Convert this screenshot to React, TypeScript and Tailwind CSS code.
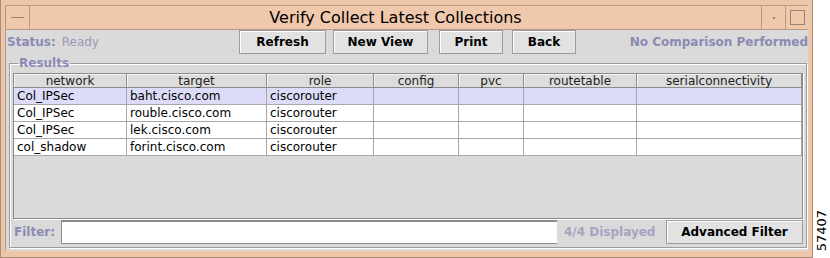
const columns = [
  { name: "network", width: 113 },
  { name: "target", width: 140 },
  { name: "role", width: 107 },
  { name: "config", width: 85 },
  { name: "pvc", width: 65 },
  { name: "routetable", width: 113 },
  { name: "serialconnectivity", width: 165 },
];

const rows = [
  ["Col_IPSec", "baht.cisco.com", "ciscorouter"],
  ["Col_IPSec", "rouble.cisco.com", "ciscorouter"],
  ["Col_IPSec", "lek.cisco.com", "ciscorouter"],
  ["col_shadow", "forint.cisco.com", "ciscorouter"],
];

const font = "font-['DejaVu_Sans',sans-serif]";
const label = "text-[12px] font-bold text-[#8a8ab4]";

const Button = ({ text, width }: { text: string; width: number }) => (
  <button
    className="flex h-[24px] items-center justify-center border border-[#9c9c9c] bg-[#e2e2e2] text-[12px] font-bold text-black shadow-[inset_1px_1px_0_#ffffff]"
    style={{ width }}
  >
    {text}
  </button>
);

const TitleBar = () => (
  <div className="flex h-[24px] border-b border-[#b89a84] bg-[#f0c9ac]">
    <div className="flex w-[24px] items-center justify-center border-r border-[#b89a84]">
      <div className="h-[1px] w-[13px] bg-[#a08070]" />
    </div>
    <div className="flex flex-1 items-center justify-center text-[16px] text-black">
      Verify Collect Latest Collections
    </div>
    <div className="flex w-[24px] items-center justify-center border-l border-[#b89a84]">
      <div className="h-[2px] w-[2px] bg-[#a08070]" />
    </div>
    <div className="flex w-[23px] items-center justify-center border-l border-[#b89a84]">
      <div className="h-[15px] w-[15px] border border-[#a08070]" />
    </div>
  </div>
);

const ResultsTable = () => (
  <div className="flex h-[146px] flex-col border border-[#8c8c8c] bg-[#dadada] shadow-[1px_1px_0_#ffffff]">
    <div className="flex">
      {columns.map((col) => (
        <div
          key={col.name}
          className="flex h-[14px] items-center justify-center border-r border-b border-[#8c8c8c] bg-[#dcdcdc] text-[12px] leading-none text-[#222] shadow-[inset_1px_1px_0_#f4f4f4]"
          style={{ width: col.width }}
        >
          {col.name}
        </div>
      ))}
    </div>
    {rows.map((row, r) => (
      <div
        key={r}
        className={`flex ${r === 0 ? "bg-[#dcdcf8]" : "bg-white"}`}
      >
        {columns.map((col, c) => (
          <div
            key={col.name}
            className="flex h-[17px] items-center border-r border-b border-[#a8a8a8] pl-[3px] text-[12px] leading-none text-black"
            style={{ width: col.width }}
          >
            {row[c] ?? ""}
          </div>
        ))}
      </div>
    ))}
  </div>
);

export default function App() {
  return (
    <div className={`flex h-[258px] w-[830px] bg-white ${font}`}>
      <div className="flex h-[258px] w-[813px] flex-col border-l border-r border-b border-[#b08c74] bg-[#ecc6a9] pt-[5px] pl-[4px] pr-[4px] pb-[6px]">
        <div className="flex flex-1 flex-col border-t border-l border-[#b89a84]">
          <TitleBar />
          <div className="flex flex-1 flex-col bg-[#dadada]">
            <div className="flex h-[24px] items-center">
              <div className="flex w-[233px] items-center">
                <span className={`${label} pl-[1px]`}>Status:</span>
                <span className="pl-[6px] text-[12px] text-[#9a9ab4]">Ready</span>
              </div>
              <div className="flex items-center">
                <Button text="Refresh" width={87} />
                <div className="w-[7px]" />
                <Button text="New View" width={95} />
                <div className="w-[11px]" />
                <Button text="Print" width={64} />
                <div className="w-[9px]" />
                <Button text="Back" width={64} />
              </div>
              <span className={`${label} ml-auto`}>No Comparison Performed</span>
            </div>
            <fieldset className="mt-[2px] mr-[2px] ml-[3px] border border-[#9c9c9c] px-[3px] pb-[2px] shadow-[inset_1px_1px_0_#ffffff,1px_1px_0_#ffffff]">
              <legend className={`${label} ml-[5px] px-[1px] leading-[14px]`}>
                Results
              </legend>
              <div className="mt-[3px]">
                <ResultsTable />
              </div>
              <div className="flex h-[26px] items-center">
                <span className={`${label} w-[48px] pl-[1px]`}>Filter:</span>
                <div className="h-[24px] w-[496px] border-t-2 border-l border-b border-[#8c8c8c] border-r-[#dadada] bg-white" />
                <span className="ml-[7px] text-[12px] font-bold text-[#a4a4c4]">
                  4/4 Displayed
                </span>
                <div className="ml-auto">
                  <Button text="Advanced Filter" width={137} />
                </div>
              </div>
            </fieldset>
          </div>
        </div>
      </div>
      <div className="flex flex-1 flex-col items-center justify-end pb-[7px]">
        <span className="rotate-180 text-[13px] leading-none text-black [writing-mode:vertical-rl]">
          57407
        </span>
      </div>
    </div>
  );
}
